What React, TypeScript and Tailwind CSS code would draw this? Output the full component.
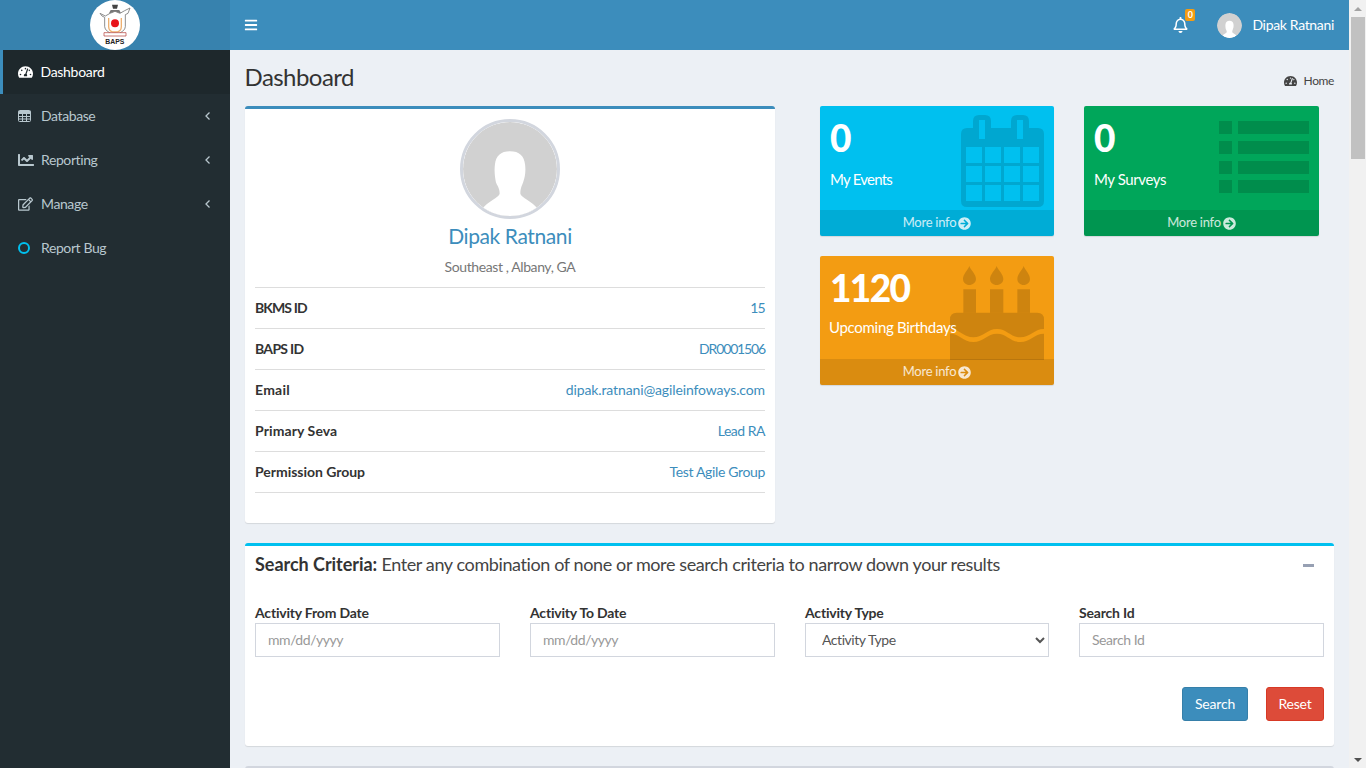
import React from "react";
import {
  FaArrowCircleRight,
  FaBars,
  FaChartLine,
  FaRegBell,
  FaRegEdit,
  FaTachometerAlt,
} from "react-icons/fa";

const Logo = () => (
  <svg viewBox="0 0 150 150" className="w-[50px] h-[50px]">
    <circle cx="75" cy="75" r="75" fill="#fff" />
    <path d="M66 14h18l-3 12H69z" fill="#444" />
    <path d="M62 30h26l5 10H57z" fill="#777" />
    <path d="M30 40l16 8 14-8 15-6 15 6 14-8 16-8-6 16-8 4v36q0 14-31 26-31-12-31-26V52l-8-4z" fill="#fff" stroke="#777" strokeWidth="2.5" />
    <path d="M56 54v26q0 16 19 16t19-16V54" fill="none" stroke="#eeb070" strokeWidth="4" />
    <circle cx="75" cy="70" r="12" fill="#e8141c" />
    <path d="M42 98h66v10H42z" fill="#fff" stroke="#b0342e" strokeWidth="2" />
    <text x="46" y="132" textLength="57" lengthAdjust="spacingAndGlyphs" fontFamily="Liberation Sans" fontWeight="700" fontSize="24" fill="#222">BAPS</text>
  </svg>
);

const Avatar = ({ size }: { size: number }) => (
  <svg viewBox="0 0 100 100" width={size} height={size}>
    <defs>
      <clipPath id={`clip${size}`}>
        <circle cx="50" cy="50" r="50" />
      </clipPath>
    </defs>
    <circle cx="50" cy="50" r="50" fill="#d1d1d1" />
    <path
      clipPath={`url(#clip${size})`}
      d="M50 31c-10 0-15 5-16 14-1 7 0 14 1 19 1 3 4 6 4 12 0 4-14 9-18 16l-2 10h62l-2-10c-4-7-18-12-18-16 0-6 2-9 3-12 2-5 3-12 2-19-1-9-6-14-16-14z"
      fill="#fff"
    />
  </svg>
);

const CalendarIcon = () => (
  <svg viewBox="0 0 83 92" className="w-[83px] h-[92px]" fill="rgba(0,0,0,0.13)">
    <path
      fillRule="evenodd"
      d="M12 6q0-6 6-6h6q6 0 6 6v7h20V6q0-6 6-6h6q6 0 6 6v7h9q6 0 6 6v67q0 6-6 6H6q-6 0-6-6V19q0-6 6-6h6zM18 5v19h6V5zM56 5v19h6V5zM5 32v16h16V32zM24 32v16h16V32zM43 32v16h16V32zM62 32v16h16V32zM5 51v16h16V51zM24 51v16h16V51zM43 51v16h16V51zM62 51v16h16V51zM5 70v16h16V70zM24 70v16h16V70zM43 70v16h16V70zM62 70v16h16V70z"
    />
  </svg>
);

const ListIcon = () => (
  <svg viewBox="0 0 90 72" className="w-[90px] h-[72px]" fill="rgba(0,0,0,0.15)">
    <rect x="0" y="0" width="13" height="13" />
    <rect x="19" y="0" width="71" height="13" />
    <rect x="0" y="20" width="13" height="13" />
    <rect x="19" y="20" width="71" height="13" />
    <rect x="0" y="40" width="13" height="13" />
    <rect x="19" y="40" width="71" height="13" />
    <rect x="0" y="59" width="13" height="13" />
    <rect x="19" y="59" width="71" height="13" />
  </svg>
);

const CakeIcon = () => (
  <svg viewBox="30 18 282 282" className="w-[94px] h-[94px]" fill="rgba(0,0,0,0.15)">
    <path d="M88 18c-5 14-19 24-19 39 0 11 9 18 19 18s20-7 20-18c0-15-15-25-20-39zM170 18c-5 14-20 24-20 39 0 11 9 18 20 18s20-7 20-18c0-15-15-25-20-39zM251 18c-5 14-19 24-19 39 0 11 9 18 19 18s19-7 19-18c0-15-14-25-19-39z" />
    <path d="M70 88h38v70H70zM150 88h40v70h-40zM232 88h38v70h-38z" />
    <path d="M30 178q0-20 20-20h242q20 0 20 20v29c-30 0-41 25-71 25s-40-25-70-25-41 25-71 25-40-25-70-25z" />
    <path d="M30 221c30 0 40 25 70 25s41-25 71-25 40 25 70 25 41-25 71-25v79H30z" />
  </svg>
);

const TableIcon = () => (
  <svg viewBox="0 0 13 12" className="w-[13px] h-[12px]" fill="none" stroke="currentColor" strokeWidth="1">
    <rect x="0.5" y="0.5" width="12" height="11" rx="1" />
    <path d="M0 3.5h13M0 6.5h13M0 9h13M4.5 3v9M8.5 3v9" />
    <path d="M0.5 2h12" strokeWidth="2" />
  </svg>
);

const AngleLeft = () => (
  <svg viewBox="0 0 5 8" className="w-[5px] h-[8px]" fill="none" stroke="currentColor" strokeWidth="1.3">
    <path d="M4.5 0.5L1 4l3.5 3.5" />
  </svg>
);

const menu = [
  { label: "Database", icon: <TableIcon /> },
  { label: "Reporting", icon: <FaChartLine className="w-[16px] h-[16px]" /> },
  { label: "Manage", icon: <FaRegEdit className="w-[15px] h-[14px]" /> },
];

const details = [
  { label: "BKMS ID", value: "15", labelSpacing: "tracking-[-0.9px]", spacing: "tracking-[-0.7px]" },
  { label: "BAPS ID", value: "DR0001506", labelSpacing: "tracking-[-0.7px]", spacing: "tracking-[-1.15px]" },
  { label: "Email", value: "dipak.ratnani@agileinfoways.com", labelSpacing: "tracking-[0.25px]", spacing: "tracking-[-0.12px]" },
  { label: "Primary Seva", value: "Lead RA", labelSpacing: "tracking-[0.1px]", spacing: "tracking-[-0.5px]" },
  { label: "Permission Group", value: "Test Agile Group", labelSpacing: "tracking-[-0.03px]", spacing: "tracking-[-0.35px]" },
];

const StatBox = ({
  value,
  label,
  color,
  icon,
  height,
  labelClass,
}: {
  value: string;
  label: string;
  color: string;
  icon: React.ReactNode;
  height: string;
  labelClass: string;
}) => (
  <div className={`relative flex flex-col rounded-[2px] shadow-[0_1px_1px_rgba(0,0,0,0.1)] overflow-hidden text-white ${color} ${height}`}>
    <div className="flex-1 p-[10px]">
      <h3 className="mt-[1px] text-[37px] leading-[42px] font-black tracking-[-1.6px] whitespace-nowrap">{value}</h3>
      <p className={`text-[15px] leading-[20px] whitespace-nowrap relative z-10 ${labelClass}`}>{label}</p>
    </div>
    {icon}
    <div className="relative z-10 h-[26px] flex items-center justify-center gap-[2px] bg-black/10 text-white/80 text-[13px] tracking-[-0.25px]">
      More info <FaArrowCircleRight className="w-[13px] h-[13px] mt-[1px]" />
    </div>
  </div>
);

const Field = ({ label, children }: { label: string; children: React.ReactNode }) => (
  <div>
    <label className="block text-[14px] leading-[20px] font-bold tracking-[-0.2px] text-[#333]">{label}</label>
    {children}
  </div>
);

const inputClass =
  "block w-full h-[34px] border border-[#d2d6de] px-3 pb-[2px] text-[14px] tracking-[-0.45px] text-[#555] placeholder:text-[#999] bg-white outline-none";

const App = () => {
  return (
    <div className="flex h-screen overflow-hidden font-['Lato',sans-serif] text-[14px] text-[#333] bg-[#ecf0f5]">
      <div className="w-[1349px] flex flex-col">
        <header className="h-[50px] shrink-0 flex bg-[#3c8dbc]">
          <div className="w-[230px] flex justify-center bg-[#3782ae]">
            <Logo />
          </div>
          <div className="flex-1 flex items-center justify-between pl-[14px] pr-[15px] text-white">
            <FaBars className="w-[14px] h-[14px]" />
            <div className="flex items-center">
              <div className="relative mr-[29px]">
                <FaRegBell className="w-[15px] h-[16px]" />
                <span className="absolute -top-[8px] left-[12px] w-[10px] h-[12px] rounded-[2px] bg-[#f39c12] text-[9px] leading-[12px] font-bold text-center">0</span>
              </div>
              <div className="mr-[10px] rounded-full overflow-hidden">
                <Avatar size={25} />
              </div>
              <span className="tracking-[-0.33px] pb-[2px]">Dipak Ratnani</span>
            </div>
          </div>
        </header>
        <div className="flex-1 flex min-h-0">
          <aside className="w-[230px] shrink-0 bg-[#222d32] text-[#b8c7ce]">
            <div className="h-[44px] flex items-center pl-[15px] border-l-[3px] border-[#3c8dbc] bg-[#1e282c] text-white">
              <FaTachometerAlt className="w-[15px] h-[14px] mr-[8px]" />
              <span className="tracking-[-0.3px] pb-[2px] -ml-[0.5px]">Dashboard</span>
            </div>
            {menu.map((item) => (
              <div key={item.label} className="h-[44px] flex items-center pl-[18px] pr-[20px]">
                <span className="w-[23px]">{item.icon}</span>
                <span className="flex-1 tracking-[-0.4px] pb-[2px]">{item.label}</span>
                <AngleLeft />
              </div>
            ))}
            <div className="h-[44px] flex items-center pl-[18px]">
              <span className="w-[23px]">
                <span className="block w-[12px] h-[12px] rounded-full border-[2.5px] border-[#00c0ef]" />
              </span>
              <span className="tracking-[-0.4px] pb-[2px]">Report Bug</span>
            </div>
          </aside>
          <main className="flex-1 min-w-0 overflow-hidden px-[15px]">
            <div className="h-[56px] flex items-start justify-between pt-[10px]">
              <h1 className="text-[24px] leading-[33px] tracking-[-0.55px] -ml-[0.5px]">Dashboard</h1>
              <div className="flex items-center mt-[12px] text-[12px] leading-[17px] text-[#444] tracking-[-0.4px]">
                <FaTachometerAlt className="w-[13px] h-[12px] mr-[7px]" />
                Home
              </div>
            </div>
            <div className="flex items-start">
              <section className="w-[530px] shrink-0 h-[417px] bg-white border-t-[3px] border-[#3c8dbc] rounded-[3px] shadow-[0_1px_1px_rgba(0,0,0,0.1)] p-[10px]">
                <div className="flex justify-center">
                  <div className="w-[100px] h-[100px] rounded-full border-[3px] border-[#d2d6de] overflow-hidden">
                    <Avatar size={94} />
                  </div>
                </div>
                <h3 className="mt-[4px] text-center text-[21px] leading-[26px] tracking-[-0.4px] text-[#3c8dbc]">Dipak Ratnani</h3>
                <p className="mt-[8px] text-center text-[#777] leading-[20px] tracking-[-0.4px]">Southeast , Albany, GA</p>
                <ul className="mt-[10px] border-b border-[#ddd]">
                  {details.map((row) => (
                    <li key={row.label} className="h-[41px] flex items-center justify-between border-t border-[#ddd] pb-[1px]">
                      <b className={row.labelSpacing}>{row.label}</b>
                      <a className={`text-[#3c8dbc] ${row.spacing}`}>{row.value}</a>
                    </li>
                  ))}
                </ul>
              </section>
              <div className="ml-[45px] w-[499px] grid grid-cols-[234px_235px] gap-x-[30px] gap-y-[20px]">
                <StatBox value="0" label="My Events" color="bg-[#00c0ef]" height="h-[130px]" labelClass="mt-[10px] tracking-[-0.75px]" icon={<div className="absolute right-[10px] top-[9px]"><CalendarIcon /></div>} />
                <StatBox value="0" label="My Surveys" color="bg-[#00a65a]" height="h-[130px]" labelClass="mt-[10px] tracking-[-0.4px]" icon={<div className="absolute right-[10px] top-[15px]"><ListIcon /></div>} />
                <StatBox value="1120" label="Upcoming Birthdays" color="bg-[#f39c12]" height="h-[129px]" labelClass="mt-[8px] -ml-[1px] tracking-[-0.3px]" icon={<div className="absolute right-[10px] top-[10px]"><CakeIcon /></div>} />
              </div>
            </div>
            <section className="mt-[20px] h-[203px] bg-white border-t-[3px] border-[#00c0ef] rounded-[3px] shadow-[0_1px_1px_rgba(0,0,0,0.1)] px-[10px]">
              <div className="flex items-center justify-between h-[38px]">
                <h3 className="text-[18px] tracking-[-0.39px] text-[#444] pb-[1px]">
                  <b className="tracking-[-0.03px] text-[#333]">Search Criteria:</b> Enter any combination of none or more search criteria to narrow down your results
                </h3>
                <span className="mr-[10px] w-[11px] h-[3px] bg-[#97a0b3]" />
              </div>
              <div className="mt-[19px] grid grid-cols-[245px_245px_244px_245px] gap-x-[30px]">
                <Field label="Activity From Date">
                  <input className={inputClass} placeholder="mm/dd/yyyy" readOnly />
                </Field>
                <Field label="Activity To Date">
                  <input className={inputClass} placeholder="mm/dd/yyyy" readOnly />
                </Field>
                <Field label="Activity Type">
                  <select className={inputClass}>
                    <option>Activity Type</option>
                  </select>
                </Field>
                <Field label="Search Id">
                  <input className={inputClass} placeholder="Search Id" readOnly />
                </Field>
              </div>
              <div className="mt-[30px] flex justify-end gap-[18px]">
                <button className="w-[66px] h-[34px] rounded-[3px] bg-[#3c8dbc] border border-[#367fa9] text-white tracking-[-0.2px] pb-[2px]">Search</button>
                <button className="w-[58px] h-[34px] rounded-[3px] bg-[#dd4b39] border border-[#d73925] text-white tracking-[-0.2px] pb-[2px]">Reset</button>
              </div>
            </section>
            <div className="mt-[20px] h-[40px] bg-white border-t-[3px] border-[#d2d6de] rounded-[3px]" />
          </main>
        </div>
      </div>
      <div className="w-[17px] shrink-0 flex flex-col items-center bg-[#f1f1f1]">
        <div className="h-[17px] flex items-center justify-center">
          <div className="w-0 h-0 border-x-[4px] border-x-transparent border-b-[4px] border-b-[#a3a3a3]" />
        </div>
        <div className="w-[14px] h-[142px] bg-[#c1c1c1]" />
        <div className="flex-1" />
        <div className="h-[17px] flex items-center justify-center">
          <div className="w-0 h-0 border-x-[4px] border-x-transparent border-t-[4px] border-t-[#505050]" />
        </div>
      </div>
    </div>
  );
};

export default App;
